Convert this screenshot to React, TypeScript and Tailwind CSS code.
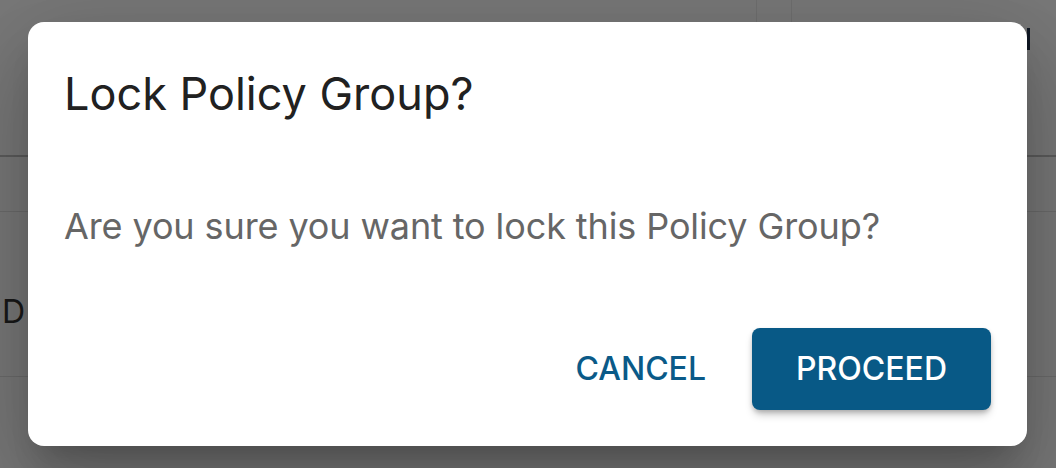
import React from "react";

const font = { fontFamily: "Inter, Roboto, 'Liberation Sans', sans-serif" };

export default function App() {
  return (
    <div className="relative w-[1056px] h-[468px] overflow-hidden bg-white" style={font}>
      {/* page behind the dialog */}
      <div className="flex flex-col w-full h-full bg-[#f0f0f0]">
        <div className="flex h-[157px] border-b-2 border-[#b8b8b8]">
          <div className="w-[757px] border-r border-[#dedede]" />
          <div className="w-[35px] border-r border-[#dedede]" />
          <div className="flex-1 flex justify-end pt-[28px] pr-[26px]">
            <div className="w-[3px] h-[22px] bg-[#23324a]" />
          </div>
        </div>
        <div className="h-[55px] border-b border-[#d6d6d6]" />
        <div className="h-[165px] border-b border-[#d6d6d6] flex items-center pl-[2px] pt-[36px]">
          <span className="text-[32px] text-[#333]">D</span>
        </div>
        <div className="flex-1" />
      </div>

      {/* backdrop */}
      <div className="absolute inset-0 bg-black/50" />

      {/* dialog */}
      <div className="absolute left-[28px] top-[22px] w-[999px] h-[424px] rounded-[16px] bg-white flex flex-col p-[36px] shadow-[0_22px_30px_-14px_rgba(0,0,0,0.2),0_48px_76px_6px_rgba(0,0,0,0.14),0_18px_92px_16px_rgba(0,0,0,0.12)]">
        <h2 className="text-[45px] leading-[72px] text-[#212121] font-normal">Lock Policy Group?</h2>
        <p className="mt-[72px] text-[36px] leading-[48px] text-[#666666] tracking-[-0.003em]">
          Are you sure you want to lock this Policy Group?
        </p>
        <div className="mt-auto flex justify-end items-center gap-[2px]">
          <button className="h-[82px] px-[44px] text-[32px] font-medium text-[#0a5a88] uppercase">
            Cancel
          </button>
          <button className="h-[82px] w-[239px] rounded-[8px] bg-[#085986] text-[32px] font-medium text-white uppercase shadow-[0_6px_8px_-2px_rgba(0,0,0,0.25),0_2px_4px_rgba(0,0,0,0.15)]">
            Proceed
          </button>
        </div>
      </div>
    </div>
  );
}
